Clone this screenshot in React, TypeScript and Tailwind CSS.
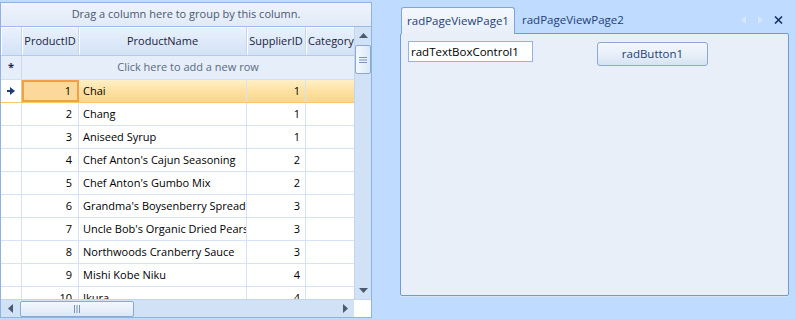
import React from "react";

type Product = { id: number; name: string; supplier: number };

const products: Product[] = [
  { id: 1, name: "Chai", supplier: 1 },
  { id: 2, name: "Chang", supplier: 1 },
  { id: 3, name: "Aniseed Syrup", supplier: 1 },
  { id: 4, name: "Chef Anton's Cajun Seasoning", supplier: 2 },
  { id: 5, name: "Chef Anton's Gumbo Mix", supplier: 2 },
  { id: 6, name: "Grandma's Boysenberry Spread", supplier: 3 },
  { id: 7, name: "Uncle Bob's Organic Dried Pears", supplier: 3 },
  { id: 8, name: "Northwoods Cranberry Sauce", supplier: 3 },
  { id: 9, name: "Mishi Kobe Niku", supplier: 4 },
  { id: 10, name: "Ikura", supplier: 4 },
];

const font = { fontFamily: '"Open Sans", "Noto Sans", sans-serif' };

function HeaderCell({ w, children }: { w: string; children?: React.ReactNode }) {
  return (
    <div
      className={`${w} shrink-0 h-full flex items-center justify-center border-r border-[#c5d6ee] shadow-[inset_1px_1px_0_#fff] overflow-hidden whitespace-nowrap`}
    >
      {children}
    </div>
  );
}

function Grid() {
  return (
    <div className="mt-[2px] w-[372px] h-[316px] border border-[#8eb2e2] bg-white flex flex-col text-[11px]">
      {/* group panel */}
      <div className="h-[24px] shrink-0 flex items-center justify-center bg-gradient-to-b from-[#eef4fc] to-[#e1eaf7] border-b border-[#9ebbe3] text-[#4a5870]">
        Drag a column here to group by this column.
      </div>
      <div className="flex flex-1 min-h-0">
        <div className="w-[353px] flex flex-col overflow-hidden">
          {/* header */}
          <div className="h-[29px] shrink-0 flex bg-gradient-to-b from-[#eaf2fc] to-[#d3e2f6] border-b border-[#b4cbea] text-[#1c1c3c]">
            <HeaderCell w="w-[21px]" />
            <HeaderCell w="w-[57px]">ProductID</HeaderCell>
            <HeaderCell w="w-[168px]">ProductName</HeaderCell>
            <HeaderCell w="w-[59px]">SupplierID</HeaderCell>
            <div className="flex-1 h-full flex items-center pl-[2px] shadow-[inset_1px_1px_0_#fff] whitespace-nowrap overflow-hidden">
              Category
            </div>
          </div>
          {/* new row */}
          <div className="h-[24px] shrink-0 flex bg-[#e6eef9] border-b border-[#d2e0f3]">
            <div className="w-[21px] shrink-0 flex items-center justify-center border-r border-[#c8d8ee] text-[#1c2a4a] text-[11px] font-bold">
              *
            </div>
            <div className="flex-1 flex items-center justify-center text-[#5b6a82]">
              Click here to add a new row
            </div>
          </div>
          {/* data rows */}
          {products.map((p) => {
            const sel = p.id === 1;
            return (
              <div
                key={p.id}
                className={`h-[23px] shrink-0 flex border-b ${
                  sel
                    ? "bg-gradient-to-b from-[#fff0c8] via-[#fde1a2] to-[#fcd588] border-[#f7c86e]"
                    : "border-[#d5e3f4]"
                } text-black`}
              >
                <div
                  className={`w-[21px] shrink-0 flex items-center justify-center border-r ${
                    sel ? "border-[#e8c987] bg-white" : "border-[#d5e3f4]"
                  }`}
                >
                  {sel && (
                    <svg width="8" height="8" viewBox="0 0 8 8">
                      <path d="M0 3h3V0l5 4-5 4V5H0z" fill="#1e3a78" />
                    </svg>
                  )}
                </div>
                <div
                  className={`w-[57px] shrink-0 flex items-center justify-end pr-[6px] ${
                    sel
                      ? "border-2 border-[#f0a048] bg-[#fcd99a]"
                      : "border-r border-[#d5e3f4]"
                  }`}
                >
                  {p.id}
                </div>
                <div className="w-[168px] shrink-0 flex items-center pl-[4px] border-r border-[#d5e3f4] whitespace-nowrap overflow-hidden">
                  {p.name}
                </div>
                <div className="w-[59px] shrink-0 flex items-center justify-end pr-[5px] border-r border-[#d5e3f4]">
                  {p.supplier}
                </div>
                <div className="flex-1" />
              </div>
            );
          })}
        </div>
        {/* vertical scrollbar */}
        <div className="w-[17px] shrink-0 bg-[#d2e2f6] flex flex-col items-center border-l border-[#c4d6ee]">
          <div className="h-[17px] w-full flex items-center justify-center">
            <svg width="9" height="5" viewBox="0 0 9 5">
              <path d="M0 5L4.5 0L9 5z" fill="#4b5a70" />
            </svg>
          </div>
          <div className="mt-[1px] w-[16px] h-[29px] rounded-[2px] border border-[#8aa9d4] bg-gradient-to-r from-[#f4f8fd] to-[#dce8f7] flex items-center justify-center">
            <svg width="8" height="6" viewBox="0 0 8 6">
              <path d="M0 0.5h8M0 3h8M0 5.5h8" stroke="#7a93b8" strokeWidth="1" />
            </svg>
          </div>
          <div className="flex-1" />
          <div className="h-[17px] w-full flex items-center justify-center">
            <svg width="9" height="5" viewBox="0 0 9 5">
              <path d="M0 0L4.5 5L9 0z" fill="#4b5a70" />
            </svg>
          </div>
        </div>
      </div>
      {/* horizontal scrollbar */}
      <div className="h-[18px] shrink-0 flex border-t border-[#c4d6ee]">
        <div className="w-[353px] bg-[#d2e2f6] flex items-center">
          <div className="w-[19px] flex items-center justify-center">
            <svg width="5" height="9" viewBox="0 0 5 9">
              <path d="M5 0L0 4.5L5 9z" fill="#4b5a70" />
            </svg>
          </div>
          <div className="w-[114px] h-[16px] rounded-[2px] border border-[#8aa9d4] bg-gradient-to-b from-[#f4f8fd] to-[#dce8f7] flex items-center justify-center">
            <svg width="6" height="8" viewBox="0 0 6 8">
              <path d="M0.5 0v8M3 0v8M5.5 0v8" stroke="#7a93b8" strokeWidth="1" />
            </svg>
          </div>
          <div className="flex-1" />
          <div className="w-[17px] flex items-center justify-center">
            <svg width="5" height="9" viewBox="0 0 5 9">
              <path d="M0 0L5 4.5L0 9z" fill="#4b5a70" />
            </svg>
          </div>
        </div>
        <div className="flex-1 bg-white" />
      </div>
    </div>
  );
}

function PageView() {
  return (
    <div className="ml-[28px] mt-[7px] w-[389px] h-[289px] flex flex-col text-[11.5px]">
      {/* tab strip */}
      <div className="h-[26px] shrink-0 flex items-end relative">
        <div className="ml-[1px] w-[114px] h-[27px] -mb-[1px] z-10 rounded-t-[3px] border border-b-0 border-[#7ea6dc] bg-gradient-to-b from-[#f4f8fd] to-[#e8eff9] flex items-center justify-center text-[#1e3f75]">
          radPageViewPage1
        </div>
        <div className="h-[26px] px-[7px] flex items-center text-[#1e3f75]">
          radPageViewPage2
        </div>
        <div className="flex-1" />
        <div className="flex items-center h-[26px] pr-[6px]">
          <svg width="5" height="8" viewBox="0 0 5 8">
            <path d="M5 0L0 4L5 8z" fill="#d8e6f8" />
          </svg>
          <svg width="5" height="8" viewBox="0 0 5 8" className="ml-[12px]">
            <path d="M0 0L5 4L0 8z" fill="#d8e6f8" />
          </svg>
          <svg width="9" height="8" viewBox="0 0 9 8" className="ml-[11px]">
            <path d="M1 0.5L8 7.5M8 0.5L1 7.5" stroke="#15326a" strokeWidth="1.6" />
          </svg>
        </div>
      </div>
      {/* content */}
      <div className="flex-1 rounded-[2px] border border-[#6e9bd8] bg-[#e8eff9] shadow-[0_1px_0_#d7e4f6] pt-[7px] pl-[7px] flex items-start">
        <div className="w-[125px] h-[21px] border border-[#94b3de] bg-white flex items-center pl-[2px] text-black">
          radTextBoxControl1
        </div>
        <div className="ml-[64px] mt-[1px] w-[111px] h-[24px] rounded-[3px] border border-[#8ca9cf] bg-gradient-to-b from-[#f3f7fc] via-[#e9f0f9] to-[#d6e3f3] flex items-center justify-center text-[#1e3f75]">
          radButton1
        </div>
      </div>
    </div>
  );
}

export default function App() {
  return (
    <div className="w-[795px] h-[319px] bg-[#bfdbff] flex overflow-hidden" style={font}>
      <Grid />
      <PageView />
    </div>
  );
}
